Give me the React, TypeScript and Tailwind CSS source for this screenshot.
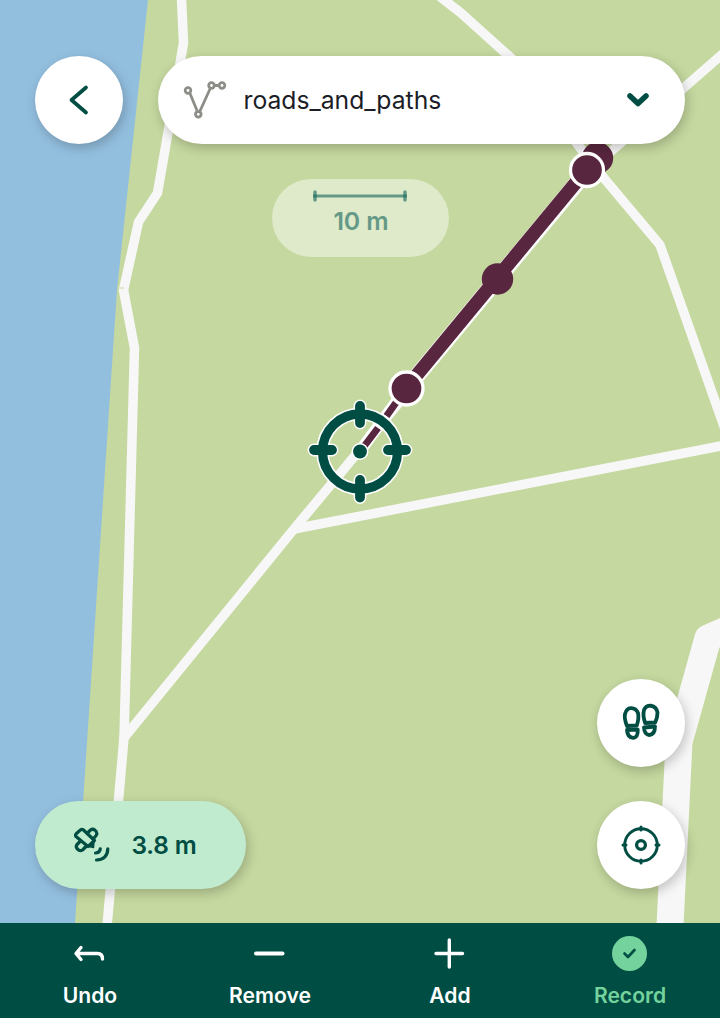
import React from "react";

type ActionProps = { label: string; active?: boolean; children: React.ReactNode };

function Action({ label, active, children }: ActionProps) {
  return (
    <button className={"flex flex-1 flex-col items-center pt-[12.500px] " + (active ? "text-[#74d29d]" : "text-white")}>
      <span className="flex h-9 items-center justify-center">{children}</span>
      <span className="mt-[11.500px] text-[21.1px] leading-[26px] font-semibold">{label}</span>
    </button>
  );
}

function MapCanvas() {
  return (
    <svg className="absolute inset-0" width="720" height="924" viewBox="0 0 720 924" fill="none">
      <path d="M0 0H720V924H0Z" fill="#c5d89f" />
      <path d="M0 0H148L117 290L111 380L75 924H0Z" fill="#93bfdf" />
      <g stroke="#f7f7f7" strokeWidth="9.5" strokeLinejoin="round">
        <path d="M181.500 -2L183.500 43L157.500 193L138.500 222L123.500 290L134.500 348L124 738L118.500 800L107 926" />
        <path d="M434 -8L461 13L520 66L578 145L603 177L660 245L726 432" />
        <path d="M726 51L600 161L294 529L123 739" />
        <path d="M294 529L726 445" />
      </g>
      <path d="M119 738L128 740" stroke="#f7f7f7" strokeWidth="3" />
      <path d="M119.500 288H124" stroke="#c5d89f" strokeWidth="1" />
      <path d="M726 630L708 638L679 742L670 926" stroke="#f7f7f7" strokeWidth="27" strokeLinejoin="round" />
      <path d="M598 157L406.500 388" stroke="white" strokeWidth="15.500" />
      <path d="M597 157L406.500 387.500" stroke="#58263f" strokeWidth="13.500" />
      <path d="M406.500 388L360 451" stroke="white" strokeWidth="11.500" />
      <path d="M406.500 388L386.500 416M378 428L362 449" stroke="#58263f" strokeWidth="7" />
      <circle cx="597.500" cy="158" r="15.700" fill="#58263f" />
      <circle cx="497.500" cy="279" r="15.700" fill="#58263f" />
      <g fill="#58263f" stroke="white" strokeWidth="3.300">
        <circle cx="587" cy="170" r="16.500" />
        <circle cx="406.500" cy="388.500" r="16.500" />
      </g>
      <g stroke="white" strokeLinecap="round">
        <circle cx="360" cy="451.500" r="37.500" strokeWidth="12.500" />
        <path d="M360 406V423M360 480V497.500M314 450H332M388 450H406" strokeWidth="12.800" />
      </g>
      <circle cx="360" cy="451.500" r="8.500" fill="white" />
      <g stroke="#004d43" strokeLinecap="round">
        <circle cx="360" cy="451.500" r="37.500" strokeWidth="9.300" />
        <path d="M360 406V423M360 480V497.500M314 450H332M388 450H406" strokeWidth="9.800" />
      </g>
      <circle cx="360" cy="451.500" r="6.900" fill="#004d43" />
    </svg>
  );
}

const round = "flex size-[88px] items-center justify-center rounded-full bg-white text-[#004d43] shadow-[2px_4px_12px_rgba(0,0,0,0.22)]";

export default function App() {
  return (
    <main className="relative flex h-[1018px] w-[720px] flex-col overflow-hidden bg-[#c5d89f] font-['Inter',sans-serif]">
      <MapCanvas />
      <section className="relative flex flex-1 flex-col px-[35px] pt-14 pb-[34.500px]">
        <header className="flex justify-between">
          <button className={round} aria-label="Back">
            <svg width="30" height="34" viewBox="0 0 30 34" fill="none" stroke="currentColor" strokeWidth="3.700" strokeLinecap="round" strokeLinejoin="round">
              <path d="M22 4.500L7.500 17L22 29.500" />
            </svg>
          </button>
          <button className="flex h-[88px] w-[527px] items-center rounded-full bg-white pr-[34px] pl-[25px] shadow-[2px_4px_12px_rgba(0,0,0,0.22)]">
            <svg width="44" height="40" viewBox="0 0 44 40" fill="none" stroke="#8d8d87" strokeWidth="2.800">
              <path d="M7 13.500L14 30.500M17 31L27 9M32 5.500H36" />
              <circle cx="5" cy="10.500" r="2.800" />
              <circle cx="15.300" cy="34.300" r="2.800" />
              <circle cx="28.500" cy="5.500" r="2.800" />
              <circle cx="39" cy="5.500" r="2.800" />
            </svg>
            <span className="ml-[16.500px] flex-1 text-left text-[24.700px] leading-8 text-[#1b1d27]">roads_and_paths</span>
            <svg width="26" height="20" viewBox="0 0 26 20" fill="none" stroke="#004d43" strokeWidth="5.500" strokeLinecap="round" strokeLinejoin="round">
              <path d="M5 6L13 13.500L21 6" />
            </svg>
          </button>
        </header>

        <div className="mt-[35px] flex h-[78px] w-[177px] flex-col items-center self-center rounded-[39px] bg-[#deeac9] pt-[11px] text-[#659987]">
          <svg width="95" height="12" viewBox="0 0 95 12" fill="none" stroke="#659987" strokeLinecap="round">
            <path d="M2 6H92" strokeWidth="3" strokeLinecap="butt" />
            <path d="M2 2V10M92 2V10" strokeWidth="3.500" />
            <path d="M2 4.500V7.500M92 4.500V7.500" stroke="#347b6e" strokeWidth="3.500" strokeLinecap="butt" />
          </svg>
          <span className="mt-1 ml-0.5 text-[24.800px] leading-[30px] font-semibold tracking-[-0.1px]">10 m</span>
        </div>

        <div className="mt-auto flex items-end justify-between">
          <div className="flex h-[88px] w-[211px] items-center rounded-full bg-[#c0ebcf] pl-[36px] text-[#004d43] shadow-[2px_4px_12px_rgba(0,0,0,0.22)]">
            <svg width="40" height="40" viewBox="0 0 40 40" fill="none" stroke="currentColor" strokeWidth="3.200" strokeLinecap="round" strokeLinejoin="round">
              <path d="M12.500 5L23.500 15.500L17 21.500L5 11.500Q4 10 5.200 8.800L9.500 4.900Q11 3.700 12.500 5Z" />
              <path d="M16.500 8L19.500 5Q21.700 3.500 23.800 5L25.200 6.500Q26.500 8.500 25.200 10.500L22 14M9.500 16L6 19.500Q4.500 21.500 6 23.500L7.500 25Q9.500 26.300 11.500 25L15.500 21" />
              <path d="M23 16L18 21.500L22.500 22.500Z" fill="currentColor" strokeWidth="1.500" />
              <path d="M24.500 28Q28.800 28 29.300 23.800M25.500 35Q36.500 34.500 36.800 23.800" />
            </svg>
            <span className="ml-[20.500px] text-[24.400px] leading-8 font-semibold tracking-[-0.15px]">3.8 m</span>
          </div>
          <div className="flex flex-col gap-[34px]">
            <button className={round} aria-label="Track">
              <svg width="40" height="40" viewBox="0 0 40 40" fill="none" stroke="currentColor" strokeWidth="3.800" strokeLinejoin="round">
                <path d="M6 23Q3 15.500 4 11Q5.500 5.500 9.800 5.200Q15 5 17 10Q18.200 15 15.800 22.500Z" />
                <path d="M6 27L16.700 26.500Q17.300 34.500 12 34.800Q6.500 34.500 6 27Z" />
                <path d="M24.200 20Q21.500 12.500 23 7Q25 2.500 29.800 2.700Q35.500 4 36.500 9.500Q36.500 15 34.200 19.500Z" />
                <path d="M23 24.500L34 23.500Q34 31.500 28.300 32Q23.300 31.500 23 24.500Z" />
              </svg>
            </button>
            <button className={round} aria-label="Center">
              <svg width="40" height="40" viewBox="0 0 40 40" fill="none" stroke="currentColor" strokeWidth="3" strokeLinecap="round">
                <circle cx="20" cy="20" r="16.300" strokeWidth="2.900" />
                <circle cx="20" cy="20" r="4.400" strokeWidth="3.300" />
                <path d="M20 2V5M20 35V38M2 20H5M35 20H38" />
              </svg>
            </button>
          </div>
        </div>
      </section>

      <nav className="relative flex h-[94.700px] bg-[#004d43]">
        <Action label="Undo">
          <svg width="36" height="24" viewBox="0 0 36 24" fill="none" stroke="currentColor" strokeWidth="3.400" strokeLinecap="round" strokeLinejoin="round">
            <path d="M9 5.500L4 11.500L9 17.500M4.500 11.500H25.500Q30.500 11.500 30.500 17" />
          </svg>
        </Action>
        <Action label="Remove">
          <svg width="36" height="24" viewBox="0 0 36 24" fill="none" stroke="currentColor" strokeWidth="4" strokeLinecap="round">
            <path d="M4 11.500H30.500" />
          </svg>
        </Action>
        <Action label="Add">
          <svg width="34" height="34" viewBox="0 0 34 34" fill="none" stroke="currentColor" strokeWidth="3.400" strokeLinecap="round">
            <path d="M3 16.500H29.500M16.300 3V30" />
          </svg>
        </Action>
        <Action label="Record" active>
          <svg width="36" height="36" viewBox="0 0 36 36" fill="none">
            <circle cx="17.500" cy="17.500" r="17.500" fill="#74d29d" />
            <path d="M12.500 17.500L16 21L22.500 14" stroke="#004d43" strokeWidth="2.600" strokeLinecap="round" strokeLinejoin="round" />
          </svg>
        </Action>
      </nav>
    </main>
  );
}
